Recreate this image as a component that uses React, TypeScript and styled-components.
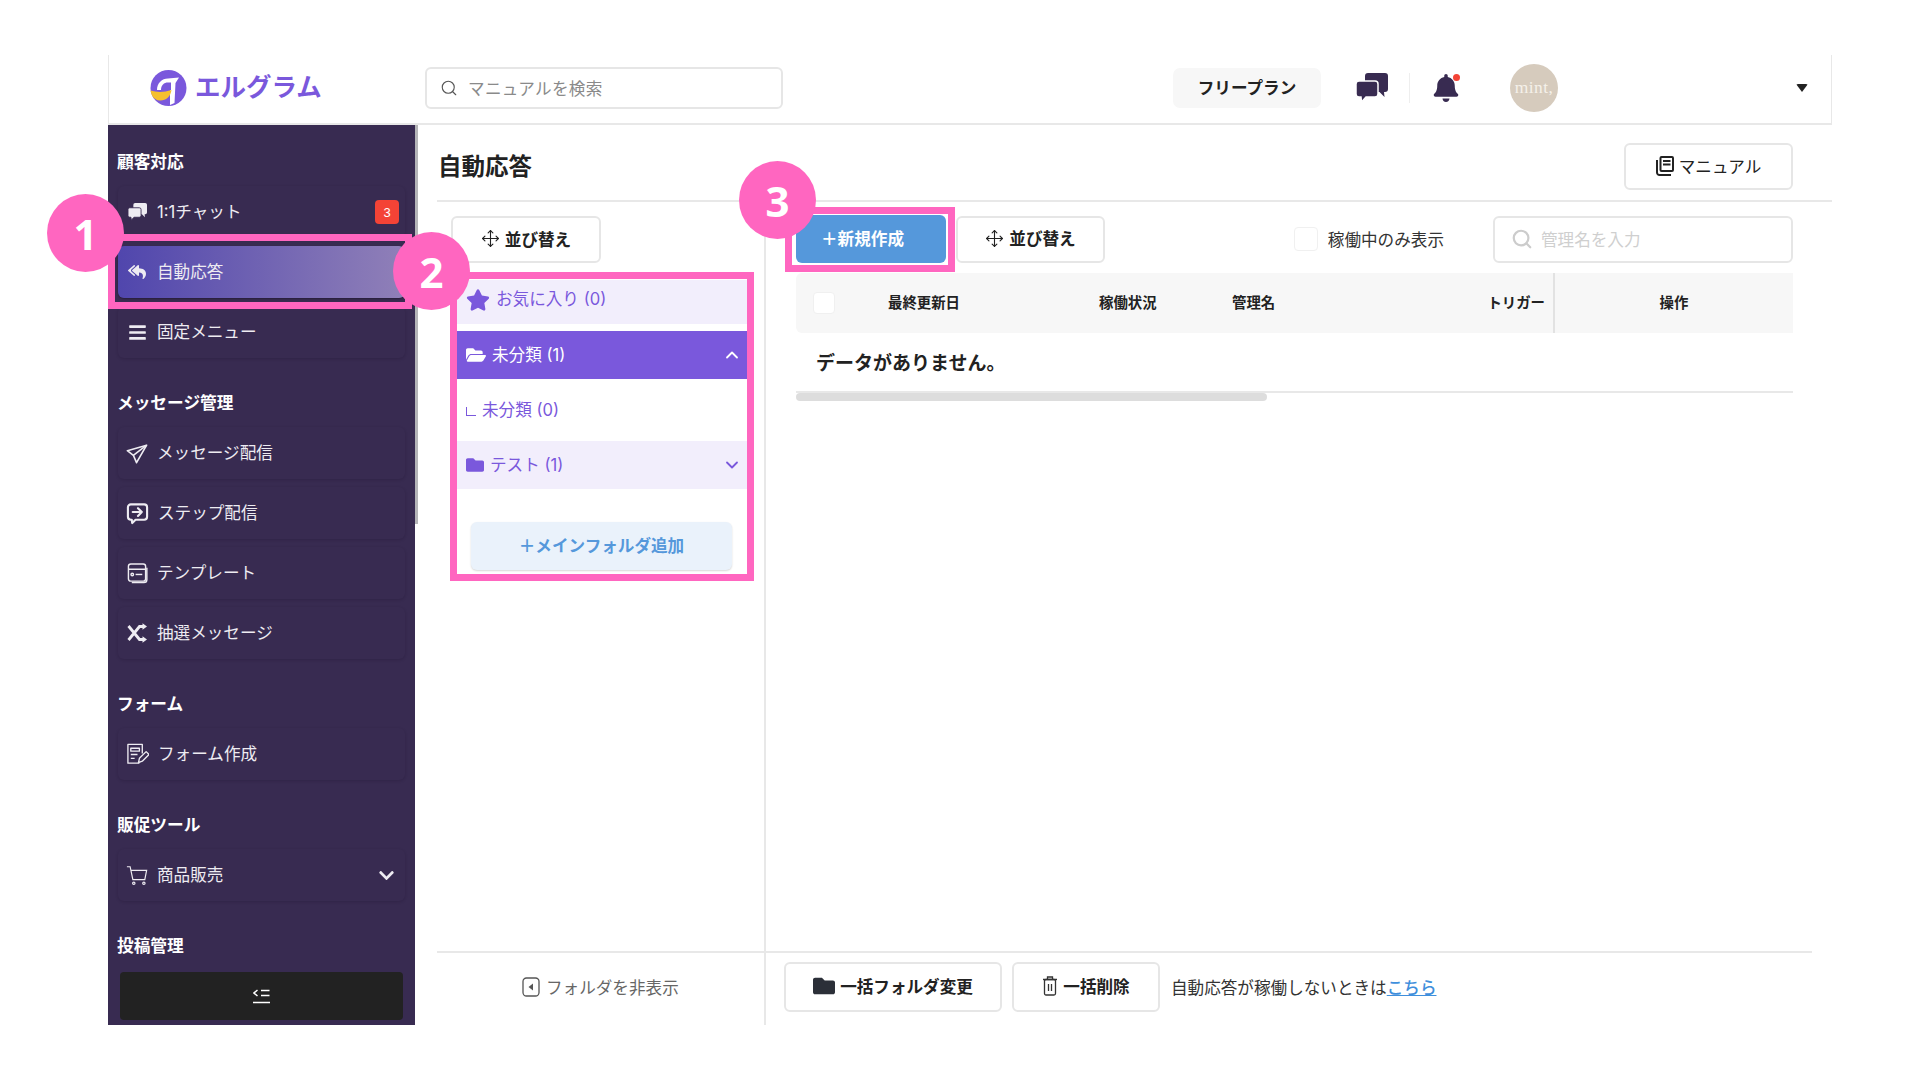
import React from 'react';
import styled, { createGlobalStyle } from 'styled-components';
import { Move, Search, ChevronDown, ChevronUp } from 'lucide-react';
import { FaBars, FaBell, FaChevronDown, FaFolder, FaFolderOpen, FaReplyAll, FaStar } from 'react-icons/fa';

const colors = {
  sidebar: '#382b51',
  purple: '#7a58dc',
  purpleSoft: '#f2eefc',
  blue: '#5598db',
  pink: '#ff66c0',
  line: '#e8e8e8',
  text: '#222222',
};

const GlobalStyle = createGlobalStyle`
  html, body {
    margin: 0;
    padding: 0;
    background: #ffffff;
  }
  body {
    font-family: Inter, "Noto Sans CJK JP", "Noto Sans", sans-serif;
    font-size: 16.6px;
    color: ${colors.text};
  }
  * {
    box-sizing: border-box;
  }
`;

const Page = styled.div`
  position: relative;
  width: 1920px;
  height: 1080px;
  padding: 55px 88px 55px 108px;
  overflow: hidden;
`;

const Shell = styled.div`
  display: flex;
  flex-direction: column;
  height: 970px;
`;

/* header */
const Header = styled.header`
  display: flex;
  align-items: center;
  flex: 0 0 70px;
  padding-bottom: 3px;
  border-left: 1px solid ${colors.line};
  border-right: 1px solid ${colors.line};
  border-bottom: 2px solid ${colors.line};
`;

const LogoLink = styled.div`
  display: flex;
  align-items: center;
  gap: 8px;
  width: 316px;
  padding-left: 41px;
`;

const LogoText = styled.span`
  padding-bottom: 2px;
  font-size: 25.5px;
  line-height: 30px;
  font-weight: 700;
  white-space: nowrap;
  color: ${colors.purple};
`;

const SearchBox = styled.div<{ $width: number; $height: number; $pad: number; $gap: number }>`
  display: flex;
  align-items: center;
  gap: ${({ $gap }) => $gap}px;
  width: ${({ $width }) => $width}px;
  height: ${({ $height }) => $height}px;
  padding-left: ${({ $pad }) => $pad}px;
  background: #ffffff;
  border: 2px solid #e6e6e6;
  border-radius: 6px;
`;

const HeaderPlaceholder = styled.span`
  color: #8a8a8a;
  letter-spacing: 0.3px;
`;

const ListPlaceholder = styled.span`
  color: #cfcfcf;
`;

const PlanBadge = styled.div`
  display: flex;
  align-items: center;
  justify-content: center;
  width: 148px;
  height: 40px;
  margin-left: 390px;
  padding-bottom: 2px;
  font-weight: 700;
  background: #f7f7f7;
  border-radius: 7px;
`;

const HeaderIcon = styled.div`
  position: relative;
  display: flex;
  color: ${colors.sidebar};
`;

const ChatSlot = styled(HeaderIcon)`
  margin-left: 35px;
`;

const BellSlot = styled(HeaderIcon)`
  margin-left: 22px;
`;

const HeaderDivider = styled.div`
  width: 1px;
  height: 30px;
  margin-left: 21px;
  background: #eeeeee;
`;

const BellDot = styled.span`
  position: absolute;
  top: 0;
  right: 0;
  width: 7px;
  height: 7px;
  border-radius: 50%;
  background: #f44336;
`;

const Avatar = styled.div`
  display: flex;
  align-items: center;
  justify-content: center;
  width: 48px;
  height: 48px;
  margin-left: 50px;
  font-family: "Liberation Serif", serif;
  font-size: 17.5px;
  letter-spacing: 0.4px;
  color: #f5f1ea;
  background: #d6cbbd;
  border-radius: 50%;
`;

const Caret = styled.span`
  width: 0;
  height: 0;
  margin-left: 238px;
  border-left: 6px solid transparent;
  border-right: 6px solid transparent;
  border-top: 8px solid #222222;
  border-radius: 2px;
`;

/* body */
const Body = styled.div`
  display: flex;
  flex: 1;
  min-height: 0;
`;

const Sidebar = styled.aside`
  display: flex;
  flex-direction: column;
  flex: 0 0 307px;
  color: #ffffff;
  background: ${colors.sidebar};
`;

const SideScroll = styled.div`
  flex: 1;
  min-height: 0;
  padding: 25px 10px 0;
  overflow: hidden;
`;

const ScrollTrack = styled.div`
  flex: 0 0 3px;
  height: 399px;
  background: #b5b5b8;
`;

const SideSection = styled.section`
  margin-bottom: 33px;
`;

const SideHeading = styled.h3`
  height: 24px;
  margin: 0 0 12px -1px;
  font-size: 16.7px;
  line-height: 24px;
  font-weight: 700;
  color: #ffffff;
`;

const SideItem = styled.div<{ $active?: boolean }>`
  display: flex;
  align-items: center;
  height: 52px;
  margin-bottom: 8px;
  padding: 0 10px 0 8px;
  border-radius: 6px;
  color: #eeecf2;
  background: ${({ $active }) => ($active ? 'linear-gradient(90deg, #5046ad 0%, #9080b8 100%)' : 'transparent')};
  box-shadow: ${({ $active }) => ($active ? '0 1px 2px rgba(0,0,0,.3)' : '0 1px 3px rgba(20,12,35,.2)')};
  &:last-child {
    margin-bottom: 0;
  }
`;

const SideIcon = styled.span`
  display: flex;
  align-items: center;
  justify-content: center;
  flex: 0 0 22px;
  margin-right: 9px;
`;

const SideLabel = styled.span`
  flex: 1;
  line-height: 24px;
`;

const CountBadge = styled.span`
  display: flex;
  align-items: center;
  justify-content: center;
  width: 24px;
  height: 24px;
  margin-right: -4px;
  font-family: "Liberation Sans", sans-serif;
  font-size: 13px;
  color: #ffffff;
  background: #f44336;
  border-radius: 4px;
`;

const CollapseButton = styled.div`
  display: flex;
  align-items: center;
  justify-content: center;
  flex: 0 0 48px;
  margin: 0 12px 5px;
  background: #222222;
  border-radius: 4px;
`;

/* main */
const Main = styled.main`
  display: flex;
  flex-direction: column;
  flex: 1;
  min-width: 0;
  padding-left: 19px;
`;

const TitleRow = styled.div`
  display: flex;
  align-items: center;
  justify-content: space-between;
  flex: 0 0 77px;
  padding: 8px 39px 0 1px;
  border-bottom: 2px solid ${colors.line};
`;

const PageTitle = styled.h1`
  margin: 0;
  font-size: 23.5px;
  line-height: 32px;
  font-weight: 700;
`;

const OutlineButton = styled.div<{ $width: number; $height?: number; $bold?: boolean }>`
  display: flex;
  align-items: center;
  justify-content: center;
  gap: 5px;
  flex: 0 0 auto;
  width: ${({ $width }) => $width}px;
  height: ${({ $height }) => $height ?? 47}px;
  padding-bottom: 2px;
  font-weight: ${({ $bold }) => ($bold ? 700 : 400)};
  color: ${colors.text};
  background: #ffffff;
  border: 2px solid #e6e6e6;
  border-radius: 6px;
`;

const Columns = styled.div`
  display: flex;
  flex: 1;
  min-height: 0;
`;

const FolderColumn = styled.div`
  flex: 0 0 329px;
  padding: 14px 0 0 14px;
  border-right: 2px solid ${colors.line};
`;

const FolderList = styled.div`
  width: 290px;
  margin: 17px 0 0 6px;
  color: ${colors.purple};
`;

const FolderRow = styled.div<{ $variant: 'soft' | 'selected' | 'plain'; $height: number }>`
  display: flex;
  align-items: center;
  gap: 6px;
  height: ${({ $height }) => $height}px;
  padding: 0 5px 1px 9px;
  color: ${({ $variant }) => ($variant === 'selected' ? '#ffffff' : colors.purple)};
  background: ${({ $variant }) =>
    $variant === 'selected' ? colors.purple : $variant === 'soft' ? colors.purpleSoft : '#ffffff'};
`;

const FavoriteRow = styled(FolderRow)`
  margin-bottom: 7px;
  padding-bottom: 4px;
`;

const FolderName = styled.span`
  flex: 1;
  line-height: 24px;
`;

const FavoriteName = styled(FolderName)`
  padding-bottom: 2px;
`;

const SubCorner = styled.span`
  width: 10px;
  height: 9px;
  margin-top: 3px;
  border-left: 1.5px solid ${colors.purple};
  border-bottom: 1.5px solid ${colors.purple};
`;

const AddFolderButton = styled.div`
  display: flex;
  align-items: center;
  justify-content: center;
  height: 48px;
  margin: 33px 15px 0 14px;
  padding-bottom: 2px;
  font-weight: 700;
  color: ${colors.blue};
  background: #eaf2fb;
  border-radius: 6px;
  box-shadow: 0 1px 2px rgba(0, 0, 0, 0.16);
`;

const ListColumn = styled.div`
  flex: 1;
  min-width: 0;
  padding: 13px 39px 0 30px;
`;

const Toolbar = styled.div`
  display: flex;
  align-items: center;
  height: 48px;
`;

const PrimaryButton = styled.div`
  display: flex;
  align-items: center;
  justify-content: center;
  width: 150px;
  height: 48px;
  margin-right: 10px;
  padding: 0 17px 2px 0;
  font-weight: 700;
  color: #ffffff;
  background: ${colors.blue};
  border-radius: 6px;
`;

const ActiveFilter = styled.label`
  display: flex;
  align-items: center;
  gap: 10px;
  margin: 0 49px 0 auto;
  color: #333333;
`;

const CheckSquare = styled.span<{ $size: number }>`
  display: block;
  flex: 0 0 auto;
  width: ${({ $size }) => $size}px;
  height: ${({ $size }) => $size}px;
  background: #ffffff;
  border: 1px solid #f0f0f0;
  border-radius: 4px;
`;

const TableHead = styled.div`
  display: grid;
  grid-template-columns: 92px 211px 133px 1fr 240px;
  align-items: center;
  height: 60px;
  margin-top: 10px;
  font-size: 14.4px;
  font-weight: 700;
  background: #f7f7f7;
  border-radius: 6px 0 0 6px;
`;

const HeadCheck = styled.div`
  padding-left: 17px;
`;

const HeadCell = styled.div`
  padding-bottom: 4px;
`;

const HeadNameTrigger = styled(HeadCell)`
  display: flex;
  justify-content: space-between;
  padding-right: 8px;
`;

const HeadAction = styled(HeadCell)`
  display: flex;
  align-items: center;
  justify-content: center;
  height: 100%;
  border-left: 2px solid #e2e2e2;
`;

const EmptyRow = styled.div`
  display: flex;
  align-items: center;
  height: 60px;
  padding: 0 0 2px 20px;
  font-size: 19px;
  font-weight: 700;
  border-bottom: 2px solid ${colors.line};
`;

const ScrollThumb = styled.div`
  width: 471px;
  height: 8px;
  background: #dddddd;
  border-radius: 4px;
`;

const Footer = styled.div`
  display: flex;
  flex: 0 0 74px;
  margin-right: 20px;
  border-top: 2px solid ${colors.line};
`;

const FolderToggleCell = styled.div`
  display: flex;
  align-items: center;
  gap: 6px;
  flex: 0 0 329px;
  padding: 0 0 4px 85px;
  color: #666666;
  border-right: 2px solid ${colors.line};
`;

const BulkActions = styled.div`
  display: flex;
  align-items: center;
  gap: 10px;
  padding: 0 0 5px 18px;
`;

const HelpNote = styled.span`
  margin-left: 1px;
  color: #333333;
`;

const HelpLink = styled.a`
  font-weight: 500;
  color: #3f8fdc;
  text-decoration: underline;
`;

/* pink call-outs laid over the screenshot */
const CallOutFrame = styled.div<{ $x: number; $y: number; $w: number; $h: number }>`
  position: absolute;
  left: ${({ $x }) => $x}px;
  top: ${({ $y }) => $y}px;
  width: ${({ $w }) => $w}px;
  height: ${({ $h }) => $h}px;
  border: 7px solid ${colors.pink};
  pointer-events: none;
`;

const CallOutBadge = styled.div<{ $x: number; $y: number }>`
  position: absolute;
  left: ${({ $x }) => $x - 38}px;
  top: ${({ $y }) => $y - 39}px;
  display: flex;
  align-items: center;
  justify-content: center;
  width: 77px;
  height: 78px;
  font-family: "Noto Sans", sans-serif;
  font-size: 42px;
  font-weight: 700;
  color: #ffffff;
  background: ${colors.pink};
  border-radius: 50%;
`;

const LogoMark = () => (
  <svg width="37" height="36" viewBox="0 0 37 36">
    <circle cx="18.500" cy="18" r="18" fill="#7a58dc" />
    <path d="M7 20C7 13 12 8.500 18 8.500L29 7.500l-3.500 5.500-1 20L20 35V20z" fill="#ffffff" />
    <path d="M11 20c0-5 3-7.500 7-7.500h3V20z" fill="#7a58dc" />
    <path d="M0.600 20.500C7 22.500 14 22.500 21.500 20 20.500 27 15.500 31 9.500 30.500 4.500 30 1.200 26 0.600 20.500z" fill="#f5c02f" />
  </svg>
);

const BubblesIcon = ({ width, gap }: { width: number; gap: string }) => (
  <svg width={width} viewBox="0 0 32 29" fill="currentColor">
    <path d="M12 0h17a3 3 0 0 1 3 3v13a3 3 0 0 1-3 3h-1l.5 5-5-5H12a3 3 0 0 1-3-3V3a3 3 0 0 1 3-3z" />
    <path
      d="M3 8h16a3 3 0 0 1 3 3v10a3 3 0 0 1-3 3H10l-4.500 5-.5-5H3a3 3 0 0 1-3-3V11a3 3 0 0 1 3-3z"
      stroke={gap}
      strokeWidth="1.500"
    />
  </svg>
);

const PlaneIcon = () => (
  <svg width="22" height="22" viewBox="0 0 24 24" fill="none" stroke="currentColor" strokeWidth="1.800" strokeLinejoin="round">
    <path d="M22.500 3.500L1.500 9.500l6.500 5 3.500 8z" />
    <path d="M22.500 3.500L8 14.500" />
  </svg>
);

const StepIcon = () => (
  <svg width="23" height="23" viewBox="0 0 24 24" fill="none" stroke="currentColor" strokeWidth="2.200" strokeLinejoin="round" strokeLinecap="round">
    <path d="M5 2.500h14a3 3 0 0 1 3 3v10a3 3 0 0 1-3 3h-9l-3.500 3.500-.5-3.500H5a3 3 0 0 1-3-3v-10a3 3 0 0 1 3-3z" />
    <path d="M7 10.500h9.500M12.500 6.500l4 4-4 4" />
  </svg>
);

const TemplateIcon = () => (
  <svg width="21" height="21" viewBox="0 0 22 22" fill="none" stroke="currentColor" strokeWidth="1.500">
    <rect x="1.500" y="1" width="18" height="18" rx="2.500" />
    <path d="M1.500 6.500h18M20.800 5v12.500a3 3 0 0 1-3 3H5" />
    <circle cx="5.500" cy="12" r="1.300" />
    <path d="M9 12h7" />
  </svg>
);

const ShuffleIcon = () => (
  <svg width="20" height="20" viewBox="0 0 20 20" fill="none" stroke="currentColor" strokeWidth="2.800">
    <path d="M1.500 3l11 13.500h4M1.500 17L12.500 3.500h4" />
    <path d="M20 3.500l-4.500-3.200v6.400zM20 16.500l-4.500-3.200v6.400z" fill="currentColor" stroke="none" />
  </svg>
);

const FormIcon = () => (
  <svg width="23" height="23" viewBox="0 0 24 24" fill="none" stroke="currentColor" strokeWidth="1.400" strokeLinejoin="round">
    <path d="M14 21H2V1.500h15V11" />
    <path d="M5 5.500h9v3H5zM5 12h7M5 16h4" />
    <path d="M13 20.500l1-4.500 7-7 3 3-7 7z" />
  </svg>
);

const CartIcon = () => (
  <svg width="22" height="22" viewBox="0 0 24 24" fill="none" stroke="currentColor" strokeWidth="1.300">
    <path d="M1 3h3.500l3 14h13l2-10H5.500" />
    <circle cx="8.500" cy="21" r="1.300" />
    <circle cx="19.500" cy="21" r="1.300" />
  </svg>
);

const CollapseIcon = () => (
  <svg width="17" height="15" viewBox="0 0 17 15" fill="none" stroke="#ffffff" strokeWidth="1.500">
    <path d="M4.500 1L1 4l3.500 3" />
    <path d="M8 1.500h8.500M8 6.500h8.500M0 13.500h17" />
  </svg>
);

const BookIcon = () => (
  <svg width="18" height="20" viewBox="0 0 18 20" fill="none" stroke="#222222" strokeWidth="2">
    <rect x="4.500" y="1" width="12.500" height="14" rx="1" />
    <path d="M7 5h7.500M7 8.500h7.500M1 4v12.500a2.500 2.500 0 0 0 2.500 2.500H15" />
  </svg>
);

const TrashIcon = () => (
  <svg width="16" height="20" viewBox="0 0 16 20" fill="none" stroke="#333333" strokeWidth="1.300">
    <path d="M1 3.500h14M5.500 3.500V1h5v2.500" />
    <rect x="2.500" y="3.500" width="11" height="15.500" rx="1.500" />
    <path d="M6.500 8v7M9.500 8v7" />
  </svg>
);

const PanelHideIcon = () => (
  <svg width="18" height="20" viewBox="0 0 18 20" fill="none">
    <rect x="1" y="1" width="16" height="18" rx="3.500" stroke="#555555" strokeWidth="1.300" />
    <path d="M11 6.500v7L6.500 10z" fill="#555555" />
  </svg>
);

const sideSections = [
  {
    title: '顧客対応',
    items: [
      { label: '1:1チャット', icon: <BubblesIcon width={19} gap={colors.sidebar} />, badge: 3 },
      { label: '自動応答', icon: <FaReplyAll size={18} />, active: true },
      { label: '固定メニュー', icon: <FaBars size={19} /> },
    ],
  },
  {
    title: 'メッセージ管理',
    items: [
      { label: 'メッセージ配信', icon: <PlaneIcon /> },
      { label: 'ステップ配信', icon: <StepIcon /> },
      { label: 'テンプレート', icon: <TemplateIcon /> },
      { label: '抽選メッセージ', icon: <ShuffleIcon /> },
    ],
  },
  { title: 'フォーム', items: [{ label: 'フォーム作成', icon: <FormIcon /> }] },
  { title: '販促ツール', items: [{ label: '商品販売', icon: <CartIcon />, expandable: true }] },
];

const SortButton = ({ width }: { width: number }) => (
  <OutlineButton $width={width} $bold>
    <Move size={19} strokeWidth={1.4} />
    並び替え
  </OutlineButton>
);

const App = () => (
  <Page>
    <GlobalStyle />
    <Shell>
      <Header>
        <LogoLink>
          <LogoMark />
          <LogoText>エルグラム</LogoText>
        </LogoLink>
        <SearchBox $width={358} $height={42} $pad={13} $gap={10}>
          <Search size={18} strokeWidth={1.5} color="#555555" />
          <HeaderPlaceholder>マニュアルを検索</HeaderPlaceholder>
        </SearchBox>
        <PlanBadge>フリープラン</PlanBadge>
        <ChatSlot>
          <BubblesIcon width={32} gap="#ffffff" />
        </ChatSlot>
        <HeaderDivider />
        <BellSlot>
          <FaBell size={28} />
          <BellDot />
        </BellSlot>
        <Avatar>mint,</Avatar>
        <Caret />
      </Header>
      <Body>
        <Sidebar>
          <SideScroll>
            {sideSections.map(section => (
              <SideSection key={section.title}>
                <SideHeading>{section.title}</SideHeading>
                {section.items.map((item: any) => (
                  <SideItem key={item.label} $active={item.active}>
                    <SideIcon>{item.icon}</SideIcon>
                    <SideLabel>{item.label}</SideLabel>
                    {item.badge && <CountBadge>{item.badge}</CountBadge>}
                    {item.expandable && <FaChevronDown size={17} />}
                  </SideItem>
                ))}
              </SideSection>
            ))}
            <SideHeading>投稿管理</SideHeading>
          </SideScroll>
          <CollapseButton>
            <CollapseIcon />
          </CollapseButton>
        </Sidebar>
        <ScrollTrack />
        <Main>
          <TitleRow>
            <PageTitle>自動応答</PageTitle>
            <OutlineButton $width={169} $height={47}>
              <BookIcon />
              マニュアル
            </OutlineButton>
          </TitleRow>
          <Columns>
            <FolderColumn>
              <SortButton width={150} />
              <FolderList>
                <FavoriteRow $variant="soft" $height={44}>
                  <FaStar size={24} />
                  <FavoriteName>お気に入り (0)</FavoriteName>
                </FavoriteRow>
                <FolderRow $variant="selected" $height={48}>
                  <FaFolderOpen size={20} />
                  <FolderName>未分類 (1)</FolderName>
                  <ChevronUp size={20} strokeWidth={2.2} />
                </FolderRow>
                <FolderRow $variant="plain" $height={62}>
                  <SubCorner />
                  <FolderName>未分類 (0)</FolderName>
                </FolderRow>
                <FolderRow $variant="soft" $height={48}>
                  <FaFolder size={18} />
                  <FolderName>テスト (1)</FolderName>
                  <ChevronDown size={20} strokeWidth={2.2} />
                </FolderRow>
                <AddFolderButton>＋メインフォルダ追加</AddFolderButton>
              </FolderList>
            </FolderColumn>
            <ListColumn>
              <Toolbar>
                <PrimaryButton>＋新規作成</PrimaryButton>
                <SortButton width={149} />
                <ActiveFilter>
                  <CheckSquare $size={24} />
                  稼働中のみ表示
                </ActiveFilter>
                <SearchBox $width={300} $height={47} $pad={16} $gap={8}>
                  <Search size={22} strokeWidth={2.4} color="#cccccc" />
                  <ListPlaceholder>管理名を入力</ListPlaceholder>
                </SearchBox>
              </Toolbar>
              <TableHead>
                <HeadCheck>
                  <CheckSquare $size={22} />
                </HeadCheck>
                <HeadCell>最終更新日</HeadCell>
                <HeadCell>稼働状況</HeadCell>
                <HeadNameTrigger>
                  <span>管理名</span>
                  <span>トリガー</span>
                </HeadNameTrigger>
                <HeadAction>操作</HeadAction>
              </TableHead>
              <EmptyRow>データがありません。</EmptyRow>
              <ScrollThumb />
            </ListColumn>
          </Columns>
          <Footer>
            <FolderToggleCell>
              <PanelHideIcon />
              フォルダを非表示
            </FolderToggleCell>
            <BulkActions>
              <OutlineButton $width={218} $height={50} $bold>
                <FaFolder size={22} color="#2b2f38" />
                一括フォルダ変更
              </OutlineButton>
              <OutlineButton $width={148} $height={50} $bold>
                <TrashIcon />
                一括削除
              </OutlineButton>
              <HelpNote>
                自動応答が稼働しないときは<HelpLink>こちら</HelpLink>
              </HelpNote>
            </BulkActions>
          </Footer>
        </Main>
      </Body>
    </Shell>
    <CallOutFrame $x={108} $y={234} $w={304} $h={75} />
    <CallOutFrame $x={450} $y={272} $w={304} $h={309} />
    <CallOutFrame $x={785} $y={207} $w={170} $h={65} />
    <CallOutBadge $x={85} $y={233}>1</CallOutBadge>
    <CallOutBadge $x={431} $y={271}>2</CallOutBadge>
    <CallOutBadge $x={777} $y={200}>3</CallOutBadge>
  </Page>
);

export default App;
